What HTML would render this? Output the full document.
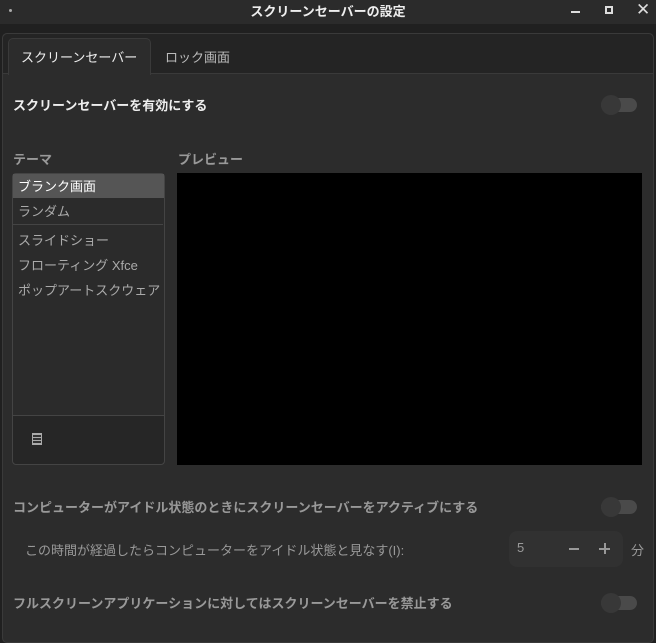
<!DOCTYPE html><html><head><meta charset="utf-8"><style>
*{margin:0;padding:0;box-sizing:border-box}
body{width:656px;height:633px;background:#202020;font-family:"Liberation Sans","Noto Sans CJK JP",sans-serif;color:#ddd;position:relative;overflow:hidden}
.a{position:absolute}
.tb{left:0;top:0;width:656px;height:24px;background:#2b2b2b}
.nb{left:2px;top:33px;width:652px;height:610px;background:#2c2c2c;border:1px solid #3a3a3a;border-radius:5px}
.hdr{left:3px;top:34px;width:650px;height:40px;background:#242424;border-bottom:1px solid #3a3a3a;border-radius:5px 5px 0 0}
.tab{left:8px;top:38px;width:143px;height:37px;background:#2c2c2c;border:1px solid #3a3a3a;border-bottom:none;border-radius:5px 5px 0 0}
.sw{width:36px;height:14px;background:#4a4a4a;border-radius:7px}
.kn{width:20px;height:20px;background:#383838;border-radius:50%}
.t{font-size:13px;white-space:nowrap}
</style></head><body>
<div class="a tb"></div>
<div class="a" style="left:9px;top:9px;width:3px;height:3px;border-radius:50%;background:#aaa"></div>
<div class="a t" style="left:0;width:656px;top:1px;text-align:center;color:#eee;font-weight:bold">スクリーンセーバーの設定</div>
<div class="a" style="left:571px;top:11px;width:9px;height:2px;background:#ddd"></div>
<div class="a" style="left:605px;top:6px;width:8px;height:8px;border:2px solid #ddd"></div>
<div class="a t" style="left:636px;top:0px;font-size:17px;color:#ddd">✕</div>
<div class="a nb"></div>
<div class="a hdr"></div>
<div class="a tab"></div>
<div class="a t" style="left:21px;top:47px;color:#eee">スクリーンセーバー</div>
<div class="a t" style="left:165px;top:47px;color:#bbb">ロック画面</div>
<div class="a t" style="left:13px;top:95px;font-weight:bold;color:#eee">スクリーンセーバーを有効にする</div>
<div class="a sw" style="left:601px;top:98px"></div><div class="a kn" style="left:601px;top:95px"></div>
<div class="a t" style="left:13px;top:149px;font-weight:bold;color:#999">テーマ</div>
<div class="a t" style="left:178px;top:149px;font-weight:bold;color:#999">プレビュー</div>
<div class="a" style="left:12px;top:173px;width:153px;height:292px;border:1px solid #444;border-radius:4px;background:#2b2b2b"></div>
<div class="a" style="left:13px;top:174px;width:151px;height:24px;background:#555"></div>
<div class="a t" style="left:18px;top:176px;color:#fff">ブランク画面</div>
<div class="a t" style="left:18px;top:201px;color:#aaa">ランダム</div>
<div class="a" style="left:13px;top:224px;width:150px;height:1px;background:#444"></div>
<div class="a t" style="left:18px;top:230px;color:#aaa">スライドショー</div>
<div class="a t" style="left:18px;top:255px;color:#aaa">フローティング Xfce</div>
<div class="a t" style="left:18px;top:280px;color:#aaa">ポップアートスクウェア</div>
<div class="a" style="left:13px;top:415px;width:151px;height:49px;background:#262626;border-top:1px solid #444;border-radius:0 0 4px 4px"></div>
<div class="a" style="left:32px;top:433px;width:10px;height:12px;border:1px solid #aaa;background:repeating-linear-gradient(#aaa 0 1px,#333 1px 3px)"></div>
<div class="a" style="left:177px;top:173px;width:465px;height:292px;background:#000"></div>
<div class="a t" style="left:13px;top:497px;font-weight:bold;color:#999">コンピューターがアイドル状態のときにスクリーンセーバーをアクティブにする</div>
<div class="a sw" style="left:601px;top:500px"></div><div class="a kn" style="left:601px;top:497px"></div>
<div class="a t" style="left:25px;top:540px;color:#999">この時間が経過したらコンピューターをアイドル状態と見なす(I):</div>
<div class="a" style="left:509px;top:531px;width:114px;height:36px;background:#313131;border-radius:8px"></div>
<div class="a t" style="left:517px;top:540px;color:#999">5</div>
<div class="a" style="left:569px;top:548px;width:10px;height:2px;background:#999"></div>
<div class="a" style="left:599px;top:548px;width:11px;height:2px;background:#999"></div>
<div class="a" style="left:604px;top:543px;width:2px;height:11px;background:#999"></div>
<div class="a t" style="left:631px;top:540px;color:#999">分</div>
<div class="a t" style="left:13px;top:593px;font-weight:bold;color:#999">フルスクリーンアプリケーションに対してはスクリーンセーバーを禁止する</div>
<div class="a sw" style="left:601px;top:596px"></div><div class="a kn" style="left:601px;top:593px"></div>
</body></html>
